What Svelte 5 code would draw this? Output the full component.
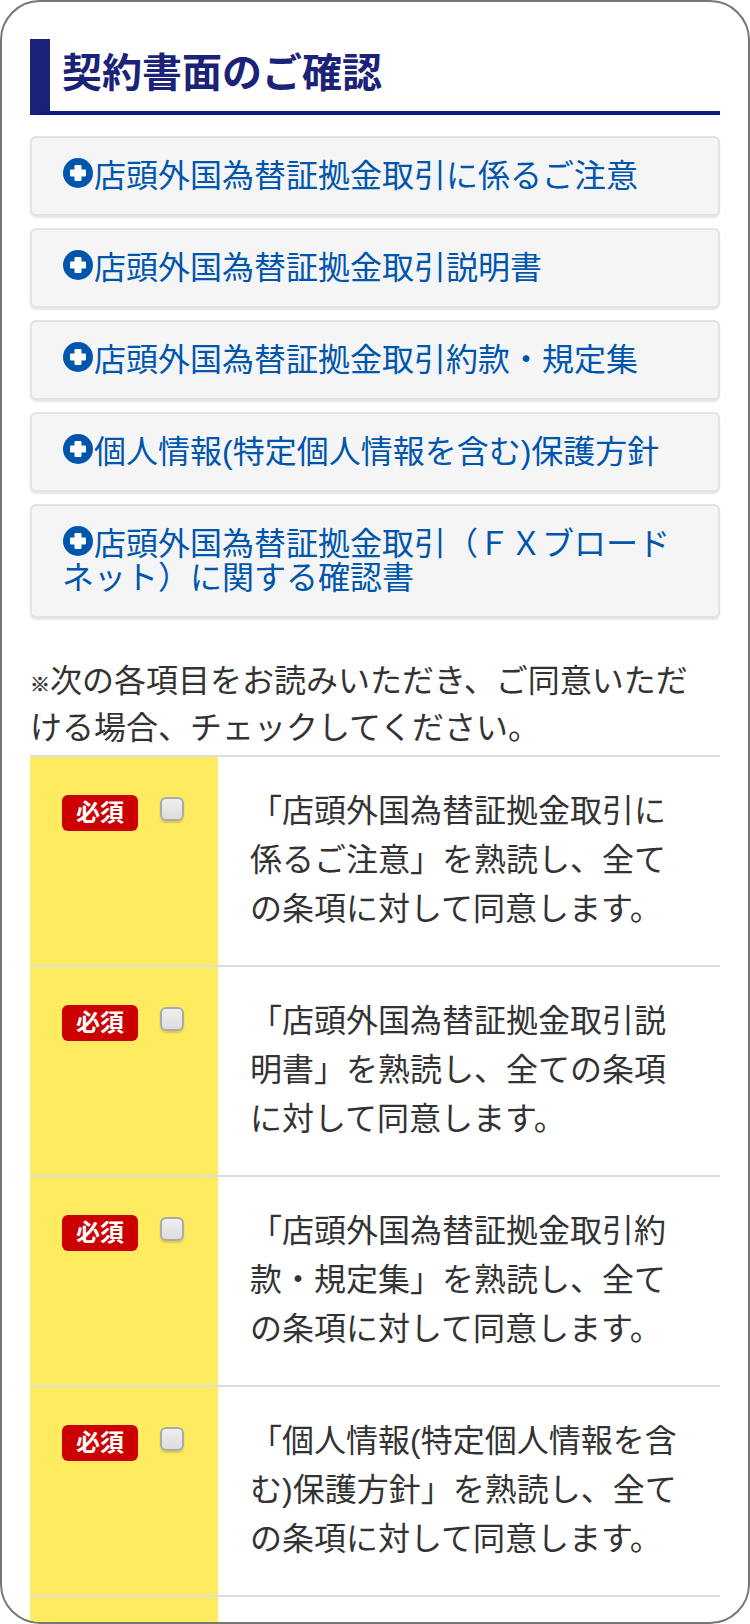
<script lang="ts">
  const links = [
    "店頭外国為替証拠金取引に係るご注意",
    "店頭外国為替証拠金取引説明書",
    "店頭外国為替証拠金取引約款・規定集",
    "個人情報(特定個人情報を含む)保護方針",
    "店頭外国為替証拠金取引（ＦＸブロードネット）に関する確認書",
  ];
  const agreements = [
    "「店頭外国為替証拠金取引に係るご注意」を熟読し、全ての条項に対して同意します。",
    "「店頭外国為替証拠金取引説明書」を熟読し、全ての条項に対して同意します。",
    "「店頭外国為替証拠金取引約款・規定集」を熟読し、全ての条項に対して同意します。",
    "「個人情報(特定個人情報を含む)保護方針」を熟読し、全ての条項に対して同意します。",
  ];
</script>

<div class="frame">
  <h2 class="title">契約書面のご確認</h2>

  <div class="links">
    {#each links as text (text)}
      <a class="link" href="#doc">
        <svg class="plus" viewBox="0 0 30 30" aria-hidden="true">
          <circle cx="15" cy="15" r="15" fill="currentColor" />
          <path d="M12 7.500h6V12h4.500v6H18v4.500h-6V18H7.500v-6H12z" fill="#fff" stroke="#fff" stroke-width="1" stroke-linejoin="round" />
        </svg>{text}
      </a>
    {/each}
  </div>

  <p class="note"><span class="mark">※</span>次の各項目をお読みいただき、ご同意いただける場合、チェックしてください。</p>

  <div class="table">
    {#each agreements as text (text)}
      <div class="row">
        <div class="head">
          <span class="badge">必須</span>
          <input class="check" type="checkbox" />
        </div>
        <div class="body">{text}</div>
      </div>
    {/each}
    <div class="row">
      <div class="head"></div>
      <div class="body"></div>
    </div>
  </div>
</div>

<style>
  :global(body) {
    margin: 0;
    background: #fff;
  }
  .frame {
    box-sizing: border-box;
    width: 750px;
    height: 1624px;
    padding: 37px 28px 0;
    border: 2px solid #777;
    border-radius: 40px;
    overflow: hidden;
    background: #fff;
    color: #333;
    font-family: "Liberation Sans", "Noto Sans CJK JP", sans-serif;
    font-size: 32px;
  }
  .title {
    box-sizing: border-box;
    height: 76px;
    margin: 0;
    padding-left: 12px;
    border-left: 20px solid #1b2378;
    border-bottom: 4px solid #0e1a80;
    color: #1b2378;
    font-size: 40px;
    font-weight: 700;
    line-height: 68px;
  }
  .links {
    display: flex;
    flex-direction: column;
    gap: 12px;
    margin-top: 21px;
  }
  .link {
    box-sizing: border-box;
    display: block;
    padding: 21px 30px;
    border: 2px solid #e3e3e3;
    border-radius: 6px;
    background: #f5f5f5;
    box-shadow: 0 2px 2px rgba(0, 0, 0, 0.1);
    color: #0055ad;
    line-height: 34px;
    text-decoration: none;
  }
  /* negative block margins: the icon must not stretch the one-line buttons */
  .plus {
    display: inline-block;
    width: 30px;
    height: 30px;
    margin: -6px 1px;
    vertical-align: 5px;
  }
  .note {
    margin: 40px 12px 0 0;
    line-height: 47px;
  }
  .mark {
    font-size: 20px;
    font-weight: 700;
    line-height: 1;
    -webkit-text-stroke: 0.5px #333;
  }
  .table {
    margin-top: 3px;
    border-top: 2px solid #ddd;
  }
  .row {
    display: grid;
    grid-template-columns: 188px 1fr;
    min-height: 208px;
    border-bottom: 2px solid #ddd;
  }
  .head {
    display: flex;
    align-items: flex-start;
    gap: 22px;
    padding: 38px 0 0 32px;
    background: #ffeb60;
  }
  .badge {
    width: 76px;
    height: 36px;
    border-radius: 6px;
    background: #c00;
    color: #fff;
    font-size: 24px;
    font-weight: 700;
    line-height: 36px;
    text-align: center;
  }
  .check {
    box-sizing: border-box;
    appearance: none;
    width: 24px;
    height: 24px;
    margin: 2px 0 0;
    border: 2px solid #aaa;
    border-radius: 6px;
    background: linear-gradient(#eee, #ddd);
    box-shadow: 0 2px 2px rgba(0, 0, 0, 0.15);
  }
  .body {
    padding: 30px 30px 0 32px;
    line-height: 49px;
  }
</style>
